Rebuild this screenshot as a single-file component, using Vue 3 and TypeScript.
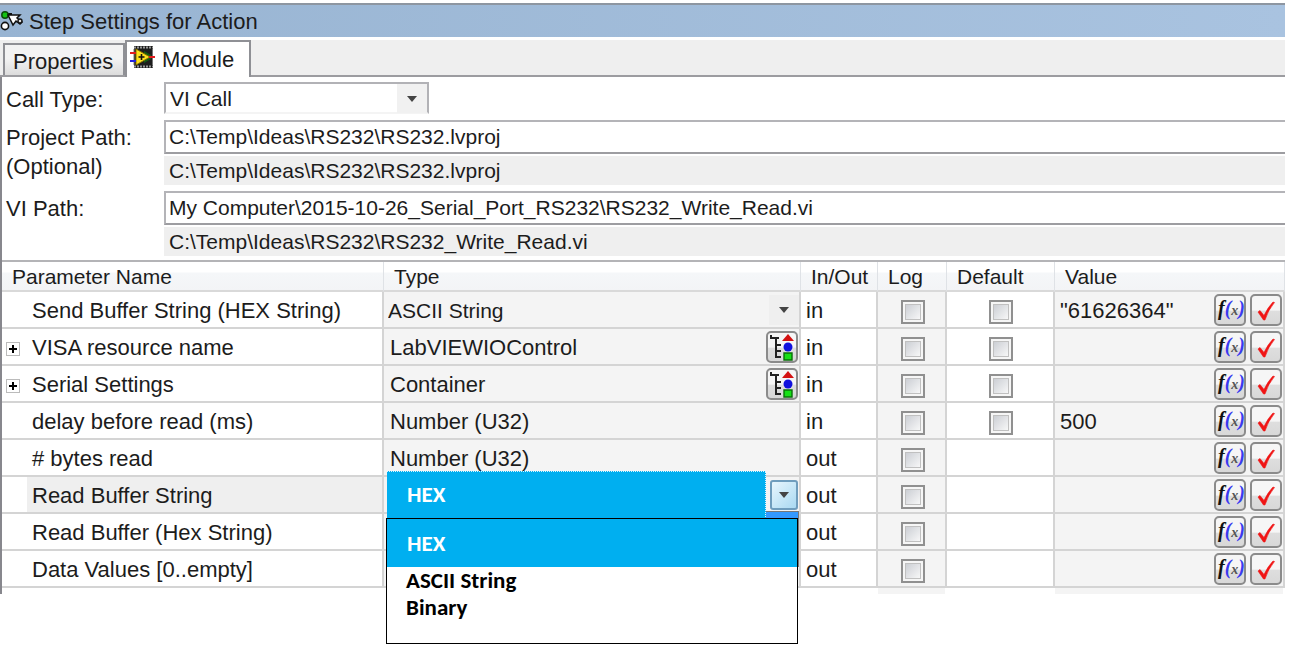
<script setup lang="ts">
import { reactive, ref } from 'vue'

interface Param {
  name: string
  type: string
  kind: 'select' | 'container' | 'plain' | 'menu'
  dir: 'in' | 'out'
  expandable?: boolean
  hasDefault?: boolean
  value?: string
  log: boolean
  useDefault: boolean
}

const row = (p: Omit<Param, 'log' | 'useDefault'>): Param => ({ ...p, log: false, useDefault: false })

const params = reactive<Param[]>([
  row({ name: 'Send Buffer String (HEX String)', type: 'ASCII String', kind: 'select', dir: 'in', hasDefault: true, value: '"61626364"' }),
  row({ name: 'VISA resource name', type: 'LabVIEWIOControl', kind: 'container', dir: 'in', expandable: true, hasDefault: true }),
  row({ name: 'Serial Settings', type: 'Container', kind: 'container', dir: 'in', expandable: true, hasDefault: true }),
  row({ name: 'delay before read (ms)', type: 'Number (U32)', kind: 'plain', dir: 'in', hasDefault: true, value: '500' }),
  row({ name: '# bytes read', type: 'Number (U32)', kind: 'plain', dir: 'out' }),
  row({ name: 'Read Buffer String', type: 'HEX', kind: 'menu', dir: 'out' }),
  row({ name: 'Read Buffer (Hex String)', type: '', kind: 'plain', dir: 'out' }),
  row({ name: 'Data Values [0..empty]', type: '', kind: 'plain', dir: 'out' }),
])

const stringTypes = ['HEX', 'ASCII String', 'Binary']
const menuOpen = ref(true)
const callType = ref('VI Call')
const projectPath = ref('C:\\Temp\\Ideas\\RS232\\RS232.lvproj')
const viPath = ref('My Computer\\2015-10-26_Serial_Port_RS232\\RS232_Write_Read.vi')

function choose(p: Param, option: string) {
  p.type = option
  menuOpen.value = false
}
</script>

<template>
  <main class="window">
    <header class="titlebar">
      <svg class="title-icon" viewBox="0 0 24 20" aria-hidden="true">
        <path d="M5 3H12" stroke="#111" stroke-width="2" />
        <circle cx="5" cy="4" r="3.2" fill="#12c312" stroke="#0b4d0b" stroke-width="1.5" />
        <circle cx="5" cy="15" r="3.6" fill="#fff" stroke="#111" stroke-width="1.6" />
        <path d="M8 4L20 4L17 7L22 11L20 13L16 10L13 14Z" fill="#fff" stroke="#111" stroke-width="1.5" />
        <circle cx="20" cy="10" r="2" fill="#ddd" stroke="#111" stroke-width="1.4" />
      </svg>
      <h1>Step Settings for Action</h1>
    </header>

    <div class="tabs" role="tablist">
      <button class="tab" role="tab" aria-selected="false">Properties</button>
      <button class="tab active" role="tab" aria-selected="true">
        <svg class="tab-icon" viewBox="0 0 26 24" aria-hidden="true">
          <path d="M4 1H23V23H4Z" fill="#1d1d1d" />
          <path d="M4 2.5H23M4 21.5H23" stroke="#999" stroke-width="2" stroke-dasharray="2 1" />
          <path d="M4 4V20M22.5 4V20" stroke="#777" />
          <path d="M14 6L21 10V14L14 18Z" fill="#145a14" />
          <path d="M6 4V20L20 12Z" fill="#ffe11c" stroke="#8a7400" />
          <path d="M8.500 12H14.500M11.500 9V15" stroke="#111" stroke-width="1.6" />
          <path d="M0 8H6M19 12H25" stroke="#e21b1b" stroke-width="2" />
          <path d="M0 16H6" stroke="#2222e0" stroke-width="2" />
        </svg>
        Module
      </button>
    </div>

    <section class="panel">
      <form class="fields" @submit.prevent>
        <label class="lbl" for="call-type">Call Type:</label>
        <div class="picker call">
          <select id="call-type" v-model="callType">
            <option>VI Call</option>
          </select>
          <span class="picker-arrow"><i class="arrow"></i></span>
        </div>

        <label class="lbl" for="project">Project Path:<br />(Optional)</label>
        <div class="pair">
          <input id="project" v-model="projectPath" type="text" class="path" />
          <output class="resolved" for="project">C:\Temp\Ideas\RS232\RS232.lvproj</output>
        </div>

        <label class="lbl" for="vi">VI Path:</label>
        <div class="pair">
          <input id="vi" v-model="viPath" type="text" class="path" />
          <output class="resolved" for="vi">C:\Temp\Ideas\RS232\RS232_Write_Read.vi</output>
        </div>
      </form>

      <table class="grid">
        <colgroup>
          <col class="c-name" /><col class="c-type" /><col class="c-dir" />
          <col class="c-log" /><col class="c-def" /><col />
        </colgroup>
        <thead>
          <tr>
            <th>Parameter Name</th><th>Type</th><th>In/Out</th><th>Log</th><th>Default</th><th>Value</th>
          </tr>
        </thead>
        <tbody>
          <tr v-for="p in params" :key="p.name">
            <td>
              <div class="name-cell">
                <span class="gutter">
                  <button v-if="p.expandable" class="expand" :aria-label="'Expand ' + p.name">
                    <svg viewBox="0 0 12 12"><path d="M2 6H10M6 2V10" stroke="#000" stroke-width="2" /></svg>
                  </button>
                </span>
                <span class="name" :class="{ current: p.kind === 'menu' }">{{ p.name }}</span>
              </div>
            </td>
            <td class="shade">
              <div v-if="p.kind === 'select'" class="picker cell">
                <select v-model="p.type" :aria-label="'Type of ' + p.name">
                  <option>ASCII String</option>
                  <option>Binary</option>
                </select>
                <span class="picker-arrow"><i class="arrow"></i></span>
              </div>
              <div v-else-if="p.kind === 'menu'" class="menu-cell">
                <button class="drop" aria-label="Show types" @click="menuOpen = !menuOpen">
                  <i class="arrow"></i>
                </button>
                <button class="chosen" aria-haspopup="listbox" :aria-expanded="menuOpen" @click="menuOpen = !menuOpen">
                  {{ p.type }}
                </button>
                <span v-if="menuOpen" class="under"></span>
                <ul v-if="menuOpen" class="menu" role="listbox" aria-label="String types">
                  <li
                    v-for="option in stringTypes"
                    :key="option"
                    role="option"
                    tabindex="0"
                    :class="{ picked: option === p.type }"
                    :aria-selected="option === p.type"
                    @click="choose(p, option)"
                  >
                    {{ option }}
                  </li>
                </ul>
              </div>
              <div v-else class="type-cell">
                <span>{{ p.type }}</span>
                <button v-if="p.kind === 'container'" class="tool" :aria-label="'Edit type of ' + p.name">
                  <svg viewBox="0 0 28 28">
                    <path d="M3 2V5H11M8 5V24H13M8 12H13M8 18H13" fill="none" stroke="#222" stroke-width="2" />
                    <path d="M20 1L26 8H14Z" fill="#d41111" />
                    <circle cx="20" cy="14" r="4.5" fill="#1111dd" />
                    <path d="M16 20H24V27H16Z" fill="#16e016" stroke="#087008" stroke-width="1.4" />
                  </svg>
                </button>
              </div>
            </td>
            <td class="dir">{{ p.dir }}</td>
            <td class="shade check">
              <input v-model="p.log" type="checkbox" :aria-label="'Log ' + p.name" />
            </td>
            <td class="check">
              <input v-if="p.hasDefault" v-model="p.useDefault" type="checkbox" :aria-label="'Default ' + p.name" />
            </td>
            <td class="shade">
              <div class="value-cell">
                <span class="value">{{ p.value }}</span>
                <button class="tool" :aria-label="'Expression for ' + p.name">
                  <svg class="fx" viewBox="0 0 28 28">
                    <text x="2" y="19"><tspan fill="#111">f</tspan><tspan fill="#3a3af0">(</tspan><tspan class="x" fill="#555">x</tspan><tspan fill="#3a3af0">)</tspan></text>
                  </svg>
                </button>
                <button class="tool" :aria-label="'Check ' + p.name">
                  <svg viewBox="0 0 28 28">
                    <path d="M6 16L8 14.500L12 19.500Q16 11 21 6L22.500 6.500Q16 14 13 24H11.500Z" fill="#f01414" stroke="#f01414" stroke-width="0.6" />
                  </svg>
                </button>
              </div>
            </td>
          </tr>
          <tr class="tail" aria-hidden="true">
            <td></td><td></td><td></td><td class="shade"></td><td></td><td class="shade"></td>
          </tr>
        </tbody>
      </table>
    </section>
  </main>
</template>

<style>
body {
  background: #fff;
}
</style>

<style scoped>
* {
  box-sizing: border-box;
}
.window {
  min-height: 100vh;
  padding: 3px 5px 0 0;
  font: 22px/29px "Liberation Sans", Arial, sans-serif;
  color: #1c1c1c;
}
button,
input,
select {
  font: inherit;
  color: inherit;
  margin: 0;
}
.titlebar {
  display: flex;
  align-items: center;
  gap: 5px;
  height: 34px;
  border-top: 2px solid #8d96a1;
  background: linear-gradient(90deg, #98b4d2, #a9c3e0);
}
.title-icon {
  width: 24px;
  height: 20px;
}
h1 {
  margin: 0;
  font-size: 22px;
  font-weight: 400;
}
.tabs {
  display: flex;
  align-items: flex-end;
  margin-top: 3px;
  padding-left: 3px;
  height: 37px;
  background: #efefef;
  border-bottom: 2px solid #9c9ca0;
}
.tab {
  height: 32px;
  width: 122px;
  padding: 2px 0 0 8px;
  text-align: left;
  border: 2px solid #8f9095;
  border-bottom: 0;
  background: linear-gradient(#f3f3f3 45%, #dcdcdc);
}
.tab.active {
  display: flex;
  align-items: center;
  gap: 6px;
  width: 126px;
  height: 37px;
  margin-bottom: -2px;
  padding: 0 0 1px 3px;
  background: #fff;
}
.tab-icon {
  width: 26px;
  height: 24px;
  margin-top: -4px;
}
.panel {
  border-left: 2px solid #87878d;
}
.fields {
  display: grid;
  grid-template-columns: 158px 1fr;
  row-gap: 6px;
  padding: 5px 0 4px 4px;
}
.lbl {
  padding-top: 3px;
}
.picker {
  display: grid;
  grid-template-columns: 1fr 30px;
  font-size: 21px;
}
.picker select {
  grid-area: 1 / 1 / 2 / 3;
  appearance: none;
  border: 0;
  border-radius: 0;
  background: transparent;
  padding: 0 0 0 4px;
  outline: 0;
}
.picker-arrow {
  grid-area: 1 / 2;
  display: flex;
  align-items: center;
  justify-content: center;
  background: #f1f1f1;
  pointer-events: none;
}
.picker.call {
  width: 265px;
  height: 32px;
  border: 2px solid #b2b2b6;
  border-bottom-color: #f4f4f4;
}
.arrow {
  width: 0;
  height: 0;
  border: 5px solid transparent;
  border-top: 6px solid #444;
  border-bottom: 0;
}
.pair {
  display: flex;
  flex-direction: column;
  gap: 2px;
  font-size: 21px;
}
.path {
  height: 34px;
  width: 100%;
  padding: 0 0 0 3px;
  border: 2px solid #b4b4b8;
  border-right: 0;
  border-bottom-color: #9d9da1;
  background: #fff;
  outline: 0;
}
.resolved {
  display: block;
  height: 29px;
  padding-left: 5px;
  line-height: 30px;
  background: #efefef;
}
.grid {
  width: 100%;
  table-layout: fixed;
  border-collapse: separate;
  border-spacing: 0;
  border-top: 2px solid #b4b4b7;
}
.c-name {
  width: 382px;
}
.c-type {
  width: 417px;
}
.c-dir {
  width: 77px;
}
.c-log {
  width: 69px;
}
.c-def {
  width: 108px;
}
th {
  height: 30px;
  padding: 2px 0 0 10px;
  line-height: 26px;
  font-size: 21px;
  font-weight: 400;
  text-align: left;
  border-bottom: 2px solid #d9d9d9;
  border-right: 1px solid #dfe2e6;
  background: linear-gradient(#fff 35%, #f5f7f9 40%, #f3f4f6);
}
td {
  height: 37px;
  padding: 0;
  border-bottom: 2px solid #d4d4d4;
  border-right: 2px solid #d4d4d4;
}
.shade {
  background: #f4f4f4;
}
.name-cell {
  display: flex;
  align-items: stretch;
  height: 35px;
}
.gutter {
  display: flex;
  align-items: center;
  width: 25px;
  padding: 4px 0 0 4px;
}
.expand {
  width: 14px;
  height: 14px;
  padding: 0;
  border: 1px solid #bbb;
  background: #fff;
}
.expand svg {
  display: block;
  width: 12px;
  height: 12px;
}
.name {
  flex: 1;
  padding-left: 5px;
  line-height: 38px;
  white-space: nowrap;
}
.name.current {
  background: #efefef;
}
.picker.cell {
  height: 35px;
  align-items: center;
}
.picker.cell select {
  padding-top: 2px;
}
.picker.cell .picker-arrow {
  height: 30px;
  background: #efefef;
}
.type-cell {
  display: flex;
  align-items: center;
  height: 35px;
  padding: 0 1px 0 6px;
}
.type-cell span,
.value {
  flex: 1;
  padding-top: 3px;
  line-height: 32px;
}
.tool {
  width: 32px;
  height: 32px;
  padding: 0;
  border: 2px solid #8b8b8b;
  border-radius: 5px;
  background: linear-gradient(#f6f6f6 50%, #dedede 55%, #d8d8d8);
}
.tool svg {
  display: block;
  width: 28px;
  height: 28px;
}
.fx {
  font: italic bold 20px "Liberation Serif", serif;
}
.fx .x {
  font-size: 14px;
}
.dir {
  padding: 2px 0 0 5px;
  line-height: 33px;
}
.check {
  padding-left: 2px;
}
.check input {
  display: block;
  appearance: none;
  width: 24px;
  height: 24px;
  margin: 4px auto 0;
  padding: 2px;
  border: 2px solid #909090;
  outline: 1px solid #c0c0c0;
  outline-offset: -5px;
  background: linear-gradient(135deg, #c9ccd2, #fafafa) content-box, #f6f6f6;
}
.value-cell {
  display: flex;
  align-items: center;
  gap: 4px;
  height: 35px;
  padding: 0 1px 0 5px;
}
.menu-cell {
  position: relative;
  display: flex;
  align-items: center;
  justify-content: flex-end;
  height: 35px;
  padding-right: 1px;
}
.drop {
  display: flex;
  align-items: center;
  justify-content: center;
  width: 28px;
  height: 30px;
  padding: 0;
  border: 2px solid #6f9dbd;
  border-radius: 3px;
  background: linear-gradient(135deg, #e8f6fd, #a9d9f2);
}
.chosen,
.menu {
  font: bold 23px/27px Carlito, Lato, "Open Sans", sans-serif;
}
.chosen {
  position: absolute;
  left: 3px;
  right: 33px;
  top: -6px;
  height: 48px;
  padding: 0 0 2px 20px;
  text-align: left;
  color: #fff;
  border: 1px dotted #d9f3ff;
  border-left: 0;
  background: #00aff0;
}
.under {
  position: absolute;
  z-index: 1;
  width: 33px;
  right: 0;
  top: 34px;
  height: 56px;
  border: 1px solid #777;
  border-bottom: 0;
  border-left: 0;
  background: #3399ff;
}
.menu {
  position: absolute;
  z-index: 2;
  left: 2px;
  right: 1px;
  top: 41px;
  height: 126px;
  margin: 0;
  padding: 0;
  list-style: none;
  color: #000;
  border: 1px solid #000;
  background: #fff;
}
.menu li {
  padding-left: 19px;
  cursor: default;
}
.menu .picked {
  padding-left: 20px;
  line-height: 48px;
  color: #fff;
  background: #00aff0;
}
.tail td {
  height: 6px;
  border-bottom: 0;
  border-right-color: #fff;
}
</style>
